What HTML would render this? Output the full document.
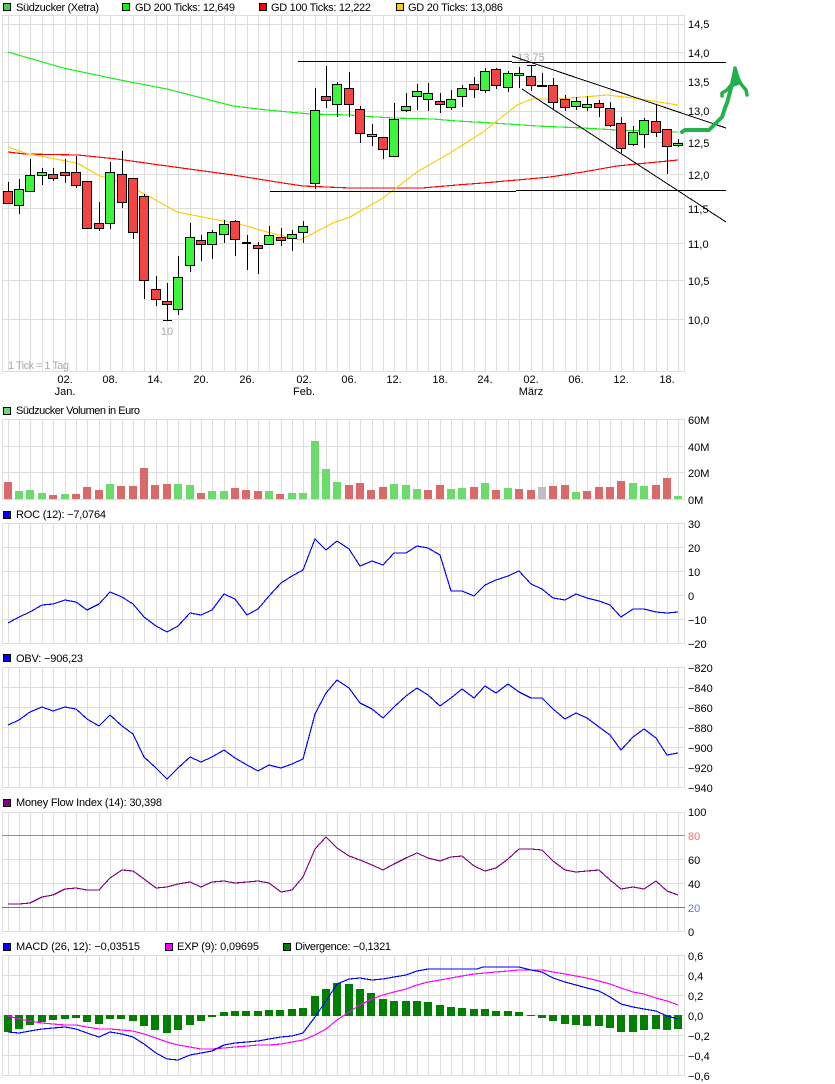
<!DOCTYPE html>
<html lang="de">
<head>
<meta charset="utf-8">
<title>Südzucker Chart</title>
<style>
html,body{margin:0;padding:0;background:#fff;width:835px;height:1084px;overflow:hidden}
svg{display:block}
text{font-family:"Liberation Sans",Arial,sans-serif;font-size:11px;fill:#000}
.g{fill:#aaa}
.c{text-anchor:middle}
path,polyline,rect{shape-rendering:crispEdges}
.l{fill:none;stroke-width:1.15}
</style>
</head>
<body>
<svg width="835" height="1084" viewBox="0 0 835 1084" xmlns="http://www.w3.org/2000/svg">
<rect width="835" height="1084" fill="#fff"/>

<!-- vertical grid -->
<path fill="none" stroke="#ddd" d="M2.5 15V1076M8.5 15V1076M19.5 15V1076M30.5 15V1076M42.5 15V1076M53.5 15V1076M65.5 15V1076M76.5 15V1076M87.5 15V1076M99.5 15V1076M110.5 15V1076M122.5 15V1076M133.5 15V1076M144.5 15V1076M156.5 15V1076M167.5 15V1076M178.5 15V1076M190.5 15V1076M201.5 15V1076M212.5 15V1076M224.5 15V1076M235.5 15V1076M247.5 15V1076M258.5 15V1076M269.5 15V1076M281.5 15V1076M292.5 15V1076M303.5 15V1076M315.5 15V1076M326.5 15V1076M337.5 15V1076M349.5 15V1076M360.5 15V1076M372.5 15V1076M383.5 15V1076M394.5 15V1076M406.5 15V1076M417.5 15V1076M428.5 15V1076M440.5 15V1076M451.5 15V1076M462.5 15V1076M474.5 15V1076M485.5 15V1076M496.5 15V1076M508.5 15V1076M519.5 15V1076M531.5 15V1076M542.5 15V1076M553.5 15V1076M565.5 15V1076M576.5 15V1076M587.5 15V1076M599.5 15V1076M610.5 15V1076M621.5 15V1076M633.5 15V1076M644.5 15V1076M656.5 15V1076M667.5 15V1076M678.5 15V1076M684.5 15V1076"/>
<!-- gaps between panels -->
<rect x="0" y="372" width="700" height="47" fill="#fff"/>
<rect x="0" y="500" width="700" height="23" fill="#fff"/>
<rect x="0" y="644" width="700" height="23" fill="#fff"/>
<rect x="0" y="788" width="700" height="24" fill="#fff"/>
<rect x="0" y="932" width="700" height="23" fill="#fff"/>
<!-- horizontal grid -->
<path fill="none" stroke="#ddd" d="M2 15.5H685M2 24.5H685M2 52.5H685M2 81.5H685M2 111.5H685M2 142.5H685M2 174.5H685M2 208.5H685M2 243.5H685M2 280.5H685M2 319.5H685M2 371.5H685M2 419.5H685M2 446.5H685M2 472.5H685M2 499.5H685M2 523.5H685M2 547.5H685M2 571.5H685M2 595.5H685M2 619.5H685M2 643.5H685M2 667.5H685M2 687.5H685M2 707.5H685M2 727.5H685M2 747.5H685M2 767.5H685M2 787.5H685M2 812.5H685M2 859.5H685M2 883.5H685M2 931.5H685M2 955.5H685M2 975.5H685M2 995.5H685M2 1015.5H685M2 1035.5H685M2 1055.5H685M2 1075.5H685"/>

<!-- legends -->
<rect x="3.5" y="3.5" width="7" height="7" fill="#3fd34f" stroke="#000"/>
<text x="16" y="11" textLength="83">Südzucker (Xetra)</text>
<rect x="122.5" y="3.5" width="7" height="7" fill="#0f0" stroke="#000"/>
<text x="135" y="11" textLength="100">GD 200 Ticks: 12,649</text>
<rect x="259.5" y="3.5" width="7" height="7" fill="#f00" stroke="#000"/>
<text x="271" y="11" textLength="100">GD 100 Ticks: 12,222</text>
<rect x="396.5" y="3.5" width="7" height="7" fill="#fc0" stroke="#000"/>
<text x="408" y="11" textLength="95">GD 20 Ticks: 13,086</text>

<!-- moving averages -->
<polyline class="l" stroke="#14f014" points="8,52 63,68 120,80 167,89 233,106 267,110 310,114 350,115 360,116 393,118 433,119 457,121 493,123 537,126 583,128 617,130 678,132"/>
<polyline class="l" stroke="#f00" points="8,152 25,154 78,155 117,159 167,166 233,175 283,183 303,186 350,188 422,188 457,185 483,183 517,180 550,177 583,172 617,166 637,164 678,160"/>
<polyline class="l" stroke="#fc0" points="8,147 25,153 50,158 77,163 100,176 120,182 143,193 177,212 213,219 243,225 267,232 300,240 333,223 350,217 383,198 417,172 450,153 483,132 517,105 532,99 557,99 583,97 607,95 633,98 678,105"/>

<!-- candles -->
<path fill="none" stroke="#000" d="M8.5 182V204M19.5 179V214M30.5 159V191M42.5 168V185M53.5 168V181M65.5 159V183M76.5 156V188M87.5 181V229M99.5 202V231M110.5 162V229M122.5 151V208M133.5 178V239M144.5 194V299M156.5 276V306M167.5 283V320M178.5 256V315M190.5 223V272M201.5 235V261M212.5 230V259M224.5 220V243M235.5 220V256M247.5 235V270M258.5 242V274M269.5 226V244M281.5 228V246M292.5 230V251M303.5 221V243M315.5 88V189M326.5 66V108M337.5 82V117M349.5 72V117M360.5 106V143M372.5 124V146M383.5 137V159M394.5 103V156M406.5 93V112M417.5 84V110M428.5 83V111M440.5 93V113M451.5 90V110M462.5 85V107M474.5 77V98M485.5 68V93M496.5 68V89M508.5 71V92M519.5 67V88M531.5 65V91M542.5 73V86M553.5 78V109M565.5 95V111M576.5 97V110M587.5 96V111M599.5 100V117M610.5 102V127M621.5 117V153M633.5 126V146M644.5 118V148M656.5 105V137M667.5 129V174M678.5 139V147M163 320.5H172M527 65.5H536M242 242.5H251M242 243.5H251M537 85.5H547M537 86.5H547"/>
<path fill="#f44444" stroke="#000" d="M3.5 191.5h9v12h-9zM48.5 174.5h9v4h-9zM60.5 172.5h9v3h-9zM71.5 172.5h9v13h-9zM82.5 181.5h9v47h-9zM94.5 223.5h9v5h-9zM117.5 174.5h9v28h-9zM128.5 178.5h9v54h-9zM139.5 196.5h9v84h-9zM151.5 289.5h9v10h-9zM162.5 301.5h9v3h-9zM196.5 240.5h9v4h-9zM230.5 221.5h9v18h-9zM253.5 245.5h9v3h-9zM276.5 237.5h9v3h-9zM321.5 96.5h9v4h-9zM344.5 88.5h9v16h-9zM355.5 109.5h9v24h-9zM378.5 137.5h9v12h-9zM435.5 101.5h9v3h-9zM469.5 84.5h9v5h-9zM491.5 69.5h9v16h-9zM526.5 76.5h9v9h-9zM548.5 85.5h9v17h-9zM560.5 99.5h9v8h-9zM594.5 103.5h9v4h-9zM605.5 108.5h9v17h-9zM616.5 123.5h9v25h-9zM651.5 121.5h9v11h-9zM662.5 129.5h9v17h-9z"/>
<path fill="#3cf53c" stroke="#000" d="M14.5 189.5h9v16h-9zM25.5 175.5h9v16h-9zM37.5 172.5h9v3h-9zM105.5 172.5h9v51h-9zM173.5 277.5h9v32h-9zM185.5 237.5h9v28h-9zM207.5 232.5h9v12h-9zM219.5 224.5h9v10h-9zM264.5 235.5h9v9h-9zM287.5 234.5h9v4h-9zM298.5 226.5h9v6h-9zM310.5 110.5h9v73h-9zM332.5 84.5h9v20h-9zM367.5 134.5h9v2h-9zM389.5 119.5h9v37h-9zM401.5 106.5h9v4h-9zM412.5 91.5h9v5h-9zM423.5 93.5h9v6h-9zM446.5 99.5h9v8h-9zM457.5 88.5h9v8h-9zM480.5 71.5h9v19h-9zM503.5 73.5h9v14h-9zM514.5 73.5h9v2h-9zM571.5 101.5h9v5h-9zM582.5 104.5h9v3h-9zM628.5 132.5h9v12h-9zM639.5 120.5h9v14h-9zM673.5 143.5h9v2h-9z"/>

<!-- chart annotations -->
<text class="g c" x="531" y="61">13,75</text>
<text class="g c" x="167" y="335">10</text>
<text class="g" x="8" y="369" textLength="61">1 Tick = 1 Tag</text>

<!-- drawn trend lines -->
<path fill="none" stroke="#000" d="M298 61.5H512M512 62.5H726M270 191.5H516M516 190.5H726M512 56L726 128M522 89L726 222"/>
<!-- hand-drawn arrow -->
<path fill="none" stroke="#22b14c" stroke-width="4" stroke-linejoin="round" stroke-linecap="round" style="shape-rendering:auto" d="M682 132L685 130L709 130L716 123L722 117L725 108L727 103L730 92L732 84L735 70"/>
<path fill="none" stroke="#22b14c" stroke-width="3.5" stroke-linejoin="round" stroke-linecap="round" style="shape-rendering:auto" d="M722 96L722 93L727 90L732 84M735 68L738 78L741 84L746 90L747 95"/>
<path fill="#22b14c" style="shape-rendering:auto" d="M735 66L730 88L741 84z"/>

<!-- main y axis -->
<text x="688" y="28">14,5</text>
<text x="688" y="57">14,0</text>
<text x="688" y="86">13,5</text>
<text x="688" y="115">13,0</text>
<text x="688" y="147">12,5</text>
<text x="688" y="179">12,0</text>
<text x="688" y="213">11,5</text>
<text x="688" y="248">11,0</text>
<text x="688" y="285">10,5</text>
<text x="688" y="324">10,0</text>

<!-- x axis -->
<text class="c" x="65" y="383">02.</text>
<text class="c" x="110" y="383">08.</text>
<text class="c" x="155" y="383">14.</text>
<text class="c" x="201" y="383">20.</text>
<text class="c" x="247" y="383">26.</text>
<text class="c" x="304" y="383">02.</text>
<text class="c" x="349" y="383">06.</text>
<text class="c" x="394" y="383">12.</text>
<text class="c" x="440" y="383">18.</text>
<text class="c" x="485" y="383">24.</text>
<text class="c" x="531" y="383">02.</text>
<text class="c" x="576" y="383">06.</text>
<text class="c" x="621" y="383">12.</text>
<text class="c" x="667" y="383">18.</text>
<text class="c" x="65" y="395">Jan.</text>
<text class="c" x="304" y="395">Feb.</text>
<text class="c" x="531" y="395">März</text>

<!-- volume -->
<rect x="3.5" y="407.5" width="7" height="7" fill="#6bdb6b" stroke="#000"/>
<text x="16" y="414" textLength="124">Südzucker Volumen in Euro</text>
<path fill="#da6a6a" d="M4 482h8v17h-8zM49 495h8v4h-8zM72 494h8v5h-8zM83 487h8v12h-8zM95 490h8v9h-8zM117 486h8v13h-8zM129 486h8v13h-8zM140 468h8v31h-8zM151 485h8v14h-8zM163 484h8v15h-8zM197 493h8v6h-8zM231 488h8v11h-8zM242 490h8v9h-8zM254 491h8v8h-8zM276 494h8v5h-8zM345 485h8v14h-8zM356 483h8v16h-8zM367 490h8v9h-8zM379 487h8v12h-8zM424 490h8v9h-8zM436 485h8v14h-8zM470 487h8v12h-8zM492 490h8v9h-8zM515 489h8v10h-8zM527 490h8v9h-8zM549 486h8v13h-8zM561 485h8v14h-8zM583 491h8v8h-8zM595 487h8v12h-8zM606 487h8v12h-8zM617 481h8v18h-8zM652 485h8v14h-8zM663 478h8v21h-8z"/>
<path fill="#6bdb6b" d="M15 491h8v8h-8zM26 490h8v9h-8zM38 493h8v6h-8zM61 494h8v5h-8zM106 484h8v15h-8zM174 484h8v15h-8zM186 485h8v14h-8zM208 491h8v8h-8zM220 491h8v8h-8zM265 491h8v8h-8zM288 493h8v6h-8zM299 493h8v6h-8zM311 441h8v58h-8zM322 469h8v30h-8zM333 482h8v17h-8zM390 484h8v15h-8zM402 485h8v14h-8zM413 489h8v10h-8zM447 489h8v10h-8zM458 488h8v11h-8zM481 483h8v16h-8zM504 488h8v11h-8zM572 492h8v7h-8zM629 483h8v16h-8zM640 486h8v13h-8zM674 496h8v3h-8z"/>
<rect x="538" y="487" width="8" height="12" fill="#bfbfbf"/>
<text x="688" y="424">60M</text>
<text x="688" y="451">40M</text>
<text x="688" y="477">20M</text>
<text x="688" y="504">0M</text>

<!-- ROC -->
<rect x="3.5" y="511.5" width="7" height="7" fill="#00f" stroke="#000"/>
<text x="16" y="518" textLength="90">ROC (12): −7,0764</text>
<polyline class="l" stroke="#00f" points="8,623 19,617 30,612 42,605 53,604 65,600 76,602 87,610 99,604 110,592 122,597 133,604 144,617 156,626 167,632 178,626 190,613 201,615 212,610 224,594 235,599 247,615 258,609 269,596 281,583 292,576 303,570 315,539 326,550 337,541 349,549 360,566 372,561 383,565 394,553 406,553 417,546 428,548 440,555 451,591 462,591 474,596 485,585 496,580 508,576 519,571 531,584 542,589 553,598 565,600 576,594 587,598 599,601 610,605 621,617 633,609 644,609 656,612 667,613 678,612"/>
<text x="688" y="528">30</text>
<text x="688" y="552">20</text>
<text x="688" y="576">10</text>
<text x="688" y="600">0</text>
<text x="688" y="624">−10</text>
<text x="688" y="648">−20</text>

<!-- OBV -->
<rect x="3.5" y="654.5" width="7" height="7" fill="#00f" stroke="#000"/>
<text x="16" y="662" textLength="67">OBV: −906,23</text>
<polyline class="l" stroke="#00f" points="8,725 19,720 30,712 42,707 53,711 65,707 76,709 87,719 99,726 110,715 122,726 133,734 144,757 156,768 167,779 178,768 190,757 201,762 212,757 224,750 235,758 247,765 258,771 269,765 281,768 292,764 303,759 315,714 326,693 337,680 349,688 360,703 372,709 383,718 394,707 406,696 417,688 428,695 440,706 451,698 462,689 474,698 485,686 496,693 508,684 519,692 531,698 542,698 553,709 565,719 576,713 587,718 599,727 610,735 621,750 633,737 644,729 656,738 667,755 678,753"/>
<text x="688" y="672">−820</text>
<text x="688" y="692">−840</text>
<text x="688" y="712">−860</text>
<text x="688" y="732">−880</text>
<text x="688" y="752">−900</text>
<text x="688" y="772">−920</text>
<text x="688" y="792">−940</text>

<!-- MFI -->
<rect x="3.5" y="799.5" width="7" height="7" fill="#800080" stroke="#000"/>
<text x="16" y="806" textLength="146">Money Flow Index (14): 30,398</text>
<path fill="none" stroke="#ee6a6a" d="M2 835.5H685"/>
<path fill="none" stroke="#6a6aee" d="M2 907.5H685"/>
<polyline class="l" stroke="#800080" points="8,904 19,904 30,903 42,897 53,895 65,889 76,888 87,890 99,890 110,878 122,870 133,871 144,879 156,888 167,887 178,884 190,882 201,887 212,882 224,881 235,883 247,882 258,881 269,883 281,892 292,890 303,877 315,849 326,837 337,848 349,856 360,860 372,865 383,870 394,864 406,858 417,853 428,858 440,861 451,857 462,856 474,866 485,871 496,868 508,859 519,849 531,849 542,850 553,861 565,870 576,872 587,871 599,870 610,880 621,889 633,887 644,889 656,881 667,891 678,895"/>
<text x="688" y="816">100</text>
<text x="688" y="840" style="fill:#f66">80</text>
<text x="688" y="864">60</text>
<text x="688" y="888">40</text>
<text x="688" y="912" style="fill:#66f">20</text>
<text x="688" y="936">0</text>

<!-- MACD -->
<rect x="3.5" y="943.5" width="7" height="7" fill="#00f" stroke="#000"/>
<text x="16" y="950" textLength="124">MACD (26, 12): −0,03515</text>
<rect x="165.5" y="943.5" width="7" height="7" fill="#f0f" stroke="#000"/>
<text x="177" y="950" textLength="82">EXP (9): 0,09695</text>
<rect x="283.5" y="943.5" width="7" height="7" fill="#008000" stroke="#000"/>
<text x="295" y="950" textLength="96">Divergence: −0,1321</text>
<path fill="#008000" d="M4 1015h8v17h-8zM15 1015h8v14h-8zM26 1015h8v10h-8zM38 1015h8v7h-8zM49 1015h8v5h-8zM61 1015h8v4h-8zM72 1015h8v3h-8zM83 1015h8v7h-8zM95 1015h8v9h-8zM106 1015h8v4h-8zM117 1015h8v4h-8zM129 1015h8v6h-8zM140 1015h8v11h-8zM151 1015h8v15h-8zM163 1015h8v18h-8zM174 1015h8v15h-8zM186 1015h8v10h-8zM197 1015h8v6h-8zM208 1015h8v2h-8zM220 1012h8v4h-8zM231 1011h8v5h-8zM242 1011h8v5h-8zM254 1011h8v5h-8zM265 1010h8v6h-8zM276 1010h8v6h-8zM288 1009h8v7h-8zM299 1008h8v8h-8zM311 996h8v20h-8zM322 989h8v27h-8zM333 983h8v33h-8zM345 984h8v32h-8zM356 989h8v27h-8zM367 993h8v23h-8zM379 999h8v17h-8zM390 1001h8v15h-8zM402 1001h8v15h-8zM413 1001h8v15h-8zM424 1002h8v14h-8zM436 1005h8v11h-8zM447 1007h8v9h-8zM458 1008h8v8h-8zM470 1009h8v7h-8zM481 1009h8v7h-8zM492 1011h8v5h-8zM504 1011h8v5h-8zM515 1012h8v4h-8zM527 1015h8v1h-8zM538 1015h8v3h-8zM549 1015h8v6h-8zM561 1015h8v9h-8zM572 1015h8v10h-8zM583 1015h8v11h-8zM595 1015h8v11h-8zM606 1015h8v13h-8zM617 1015h8v17h-8zM629 1015h8v17h-8zM640 1015h8v15h-8zM652 1015h8v14h-8zM663 1015h8v15h-8zM674 1015h8v14h-8z"/>
<polyline class="l" stroke="#f0f" points="8,1016 19,1019 30,1021 42,1023 53,1024 65,1025 76,1025 87,1027 99,1029 110,1029 122,1030 133,1031 144,1034 156,1038 167,1042 178,1045 190,1047 201,1049 212,1049 224,1048 235,1047 247,1046 258,1045 269,1045 281,1044 292,1042 303,1040 315,1035 326,1029 337,1020 349,1012 360,1005 372,999 383,995 394,992 406,989 417,985 428,982 440,980 451,978 462,976 474,974 485,973 496,972 508,971 519,970 531,970 542,970 553,972 565,974 576,976 587,978 599,981 610,984 621,988 633,992 644,994 656,998 667,1001 678,1005"/>
<polyline class="l" stroke="#00f" points="8,1032 19,1033 30,1031 42,1029 53,1028 65,1027 76,1029 87,1033 99,1037 110,1032 122,1034 133,1037 144,1044 156,1053 167,1059 178,1060 190,1055 201,1053 212,1051 224,1045 235,1043 247,1042 258,1041 269,1039 281,1037 292,1036 303,1033 315,1017 326,1001 337,984 349,979 360,978 372,980 383,979 394,977 406,975 417,971 428,969 440,969 477,969 483,967 519,967 531,970 542,972 553,978 565,982 576,985 587,988 599,991 610,997 621,1004 633,1007 644,1009 656,1011 667,1016 678,1019"/>
<text x="688" y="960">0,6</text>
<text x="688" y="980">0,4</text>
<text x="688" y="1000">0,2</text>
<text x="688" y="1020">0,0</text>
<text x="688" y="1040">−0,2</text>
<text x="688" y="1060">−0,4</text>
<text x="688" y="1080">−0,6</text>
</svg>
</body>
</html>
